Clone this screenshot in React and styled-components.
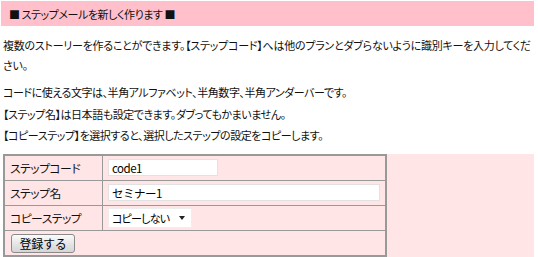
import React from "react";
import styled, { createGlobalStyle } from "styled-components";

const Global = createGlobalStyle`
  html, body { margin: 0; padding: 0; background: #fff; }
  body {
    font-family: "Noto Sans CJK JP", "Noto Sans", sans-serif;
    font-size: 11px;
    letter-spacing: -0.45px;
    color: #111;
    font-feature-settings: "palt";
  }
`;

const Page = styled.div`
  width: 538px;
  padding: 1px 4px 0 1px;
  box-sizing: border-box;
`;

const Header = styled.div`
  background: #ffc0cb;
  height: 25px;
  display: flex;
  align-items: center;
  padding-left: 8px;
`;

const Intro = styled.div`
  padding: 9px 0 0 2px;
  margin-bottom: 7px;
`;

const Para = styled.p`
  margin: 0 0 ${(p) => p.$gap || 0}px;
  line-height: ${(p) => p.$lh}px;
  letter-spacing: ${(p) => p.$ls ?? -0.45}px;
`;

const Panel = styled.div`
  margin-left: 2px;
  background: #ffe5e5;
  display: flex;
`;

const Table = styled.table`
  border-collapse: collapse;
  width: 384px;
  border: 2px solid #999;
`;

const Cell = styled.td`
  border: 1px solid #999;
  height: 24px;
  padding: 0 5px;
  font-size: 11.8px;
  letter-spacing: -0.5px;
  width: ${(p) => (p.$label ? "91px" : "auto")};
  vertical-align: middle;
`;

const TextInput = styled.input`
  box-sizing: border-box;
  width: ${(p) => p.$w}px;
  height: 17px;
  border: 1px solid #e2e2e2;
  background: #fff;
  font-family: inherit;
  font-size: 11.5px;
  letter-spacing: -0.5px;
  padding: 0 3px;
  color: #000;
  display: block;
  outline: none;
`;

const SelectBox = styled.div`
  width: 84px;
  height: 20px;
  background: #fff;
  border: 1px solid #eee;
  box-sizing: border-box;
  display: flex;
  align-items: center;
  justify-content: space-between;
  padding: 0 6px 0 3px;
  font-size: 11px;
  letter-spacing: -0.8px;
  color: #000;
`;

const Arrow = styled.span`
  width: 0;
  height: 0;
  border-left: 3.5px solid transparent;
  border-right: 3.5px solid transparent;
  border-top: 4px solid #222;
`;

const Button = styled.button`
  width: 64px;
  height: 19px;
  margin: 1px 0 0 1px;
  font-family: inherit;
  font-size: 12px;
  letter-spacing: -0.3px;
  color: #000;
  border: 1px solid #8a8a8a;
  border-radius: 3px;
  background: linear-gradient(#fbfbfb, #e2e2e2 60%, #d6d6d6);
  padding: 0;
  line-height: 17px;
  display: block;
`;

export default function App() {
  return (
    <>
      <Global />
      <Page>
        <Header>■ ステップメールを新しく作ります ■</Header>
        <Intro>
          <Para $lh={20} $gap={7} $ls={-0.25}>
            複数のストーリーを作ることができます。【ステップコード】へは他のプランとダブらないように識別キーを入力してください。
          </Para>
          <Para $lh={21.5}>
            コードに使える文字は、半角アルファベット、半角数字、半角アンダーバーです。
            <br />
            【ステップ名】は日本語も設定できます。ダブってもかまいません。
            <br />
            【コピーステップ】を選択すると、選択したステップの設定をコピーします。
          </Para>
        </Intro>
        <Panel>
          <Table>
            <tbody>
              <tr>
                <Cell $label>ステップコード</Cell>
                <Cell>
                  <TextInput $w={110} defaultValue="code1" />
                </Cell>
              </tr>
              <tr>
                <Cell $label>ステップ名</Cell>
                <Cell>
                  <TextInput $w={272} defaultValue="セミナー1" />
                </Cell>
              </tr>
              <tr>
                <Cell $label>コピーステップ</Cell>
                <Cell>
                  <SelectBox>
                    <span>コピーしない</span>
                    <Arrow />
                  </SelectBox>
                </Cell>
              </tr>
              <tr>
                <Cell colSpan={2}>
                  <Button>登録する</Button>
                </Cell>
              </tr>
            </tbody>
          </Table>
        </Panel>
      </Page>
    </>
  );
}
